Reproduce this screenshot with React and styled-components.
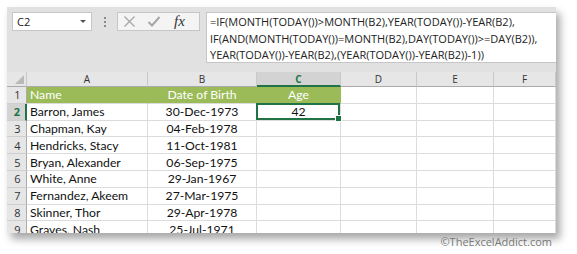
import React from "react";
import styled, { createGlobalStyle } from "styled-components";

const Global = createGlobalStyle`
  html, body { margin: 0; padding: 0; background: #ffffff; }
  body { width: 577px; height: 254px; overflow: hidden; }
`;

const Page = styled.div`
  padding: 7px 0 0 7px;
`;

const Window = styled.div`
  width: 549px;
  height: 226px;
  background: #e1e1e1;
  overflow: hidden;
  box-shadow: 4px 6px 8px rgba(0, 0, 0, 0.35);
  display: flex;
  flex-direction: column;
`;

const FormulaBar = styled.div`
  display: flex;
  flex-shrink: 0;
  align-items: flex-start;
  height: 65px;
  padding: 5px 0 0 5px;
  box-sizing: border-box;
`;

const NameBox = styled.div`
  width: 80px;
  height: 19px;
  box-sizing: border-box;
  background: #fff;
  border: 1px solid #c6c6c6;
  display: flex;
  align-items: center;
  justify-content: space-between;
  padding: 0 4px 0 4px;
  font-family: "Open Sans", sans-serif;
  font-size: 11px;
  color: #222;
`;

const Caret = styled.span`
  width: 0;
  height: 0;
  border-left: 3px solid transparent;
  border-right: 3px solid transparent;
  border-top: 3px solid #555;
  margin-right: 1px;
`;

const Dots = styled.div`
  width: 25px;
  height: 19px;
  display: flex;
  flex-direction: column;
  align-items: center;
  justify-content: center;
  gap: 2px;
  & > span {
    width: 2px;
    height: 2px;
    background: #8a8a8a;
  }
`;

const FxBox = styled.div`
  width: 83px;
  height: 19px;
  box-sizing: border-box;
  background: #f4f4f4;
  border: 1px solid #c6c6c6;
  display: flex;
  align-items: center;
  padding-left: 5px;
  gap: 11px;
  margin-right: 6px;
`;

const Fx = styled.span`
  font-family: "Liberation Serif", serif;
  font-style: italic;
  font-size: 15px;
  color: #333;
  line-height: 1;
  margin-left: 2px;
`;

const FormulaInput = styled.div`
  flex: 1;
  height: 51px;
  box-sizing: border-box;
  background: #fff;
  border: 1px solid #c6c6c6;
  border-right: none;
  padding: 1px 0 0 3px;
  font-family: "Open Sans", sans-serif;
  font-size: 11px;
  line-height: 16.5px;
  color: #222;
  white-space: nowrap;
`;

const Grid = styled.div`
  display: grid;
  flex-shrink: 0;
  grid-template-columns: 20px 121px 109px 84px 76px 77px 62px;
  grid-auto-rows: 16.8px;
  grid-template-rows: 15px;
  background: #fff;
  font-family: Lato, "Liberation Sans", sans-serif;
`;

const Corner = styled.div`
  background: #e6e6e6;
  border-right: 1px solid #c9c9c9;
  border-bottom: 1px solid #ababab;
  position: relative;
  &::after {
    content: "";
    position: absolute;
    right: 2px;
    bottom: 2px;
    width: 0;
    height: 0;
    border-left: 9px solid transparent;
    border-bottom: 9px solid #b9b9b9;
  }
`;

const ColHead = styled.div`
  background: ${(p) => (p.$sel ? "#d3d3d3" : "#e6e6e6")};
  color: ${(p) => (p.$sel ? "#217346" : "#333")};
  font-weight: ${(p) => (p.$sel ? 700 : 400)};
  border-right: 1px solid #c9c9c9;
  border-bottom: ${(p) => (p.$sel ? "2px solid #217346" : "1px solid #ababab")};
  box-sizing: border-box;
  font-family: "Open Sans", sans-serif;
  font-size: 10px;
  display: flex;
  align-items: center;
  justify-content: center;
`;

const RowHead = styled.div`
  background: ${(p) => (p.$sel ? "#d3d3d3" : "#e6e6e6")};
  color: ${(p) => (p.$sel ? "#217346" : "#333")};
  font-weight: ${(p) => (p.$sel ? 700 : 400)};
  border-right: ${(p) => (p.$sel ? "2px solid #217346" : "1px solid #ababab")};
  border-bottom: 1px solid #cfcfcf;
  box-sizing: border-box;
  font-family: "Open Sans", sans-serif;
  font-size: 11px;
  display: flex;
  align-items: center;
  justify-content: center;
  padding-left: 2px;
`;

const Cell = styled.div`
  position: relative;
  box-sizing: border-box;
  background: ${(p) => (p.$head ? "#9bbb59" : "#fff")};
  color: ${(p) => (p.$head ? "#fff" : "#111")};
  border-right: 1px solid ${(p) => (p.$head ? "#9bbb59" : "#dcdcdc")};
  border-bottom: 1px solid #dcdcdc;
  font-size: 12.2px;
  display: flex;
  align-items: center;
  justify-content: ${(p) => (p.$center ? "center" : "flex-start")};
  padding: 0 3px;
  white-space: nowrap;
  overflow: hidden;
`;

const Selection = styled.div`
  position: absolute;
  inset: -1px 0 0 -1px;
  border: 2px solid #217346;
  pointer-events: none;
  &::after {
    content: "";
    position: absolute;
    right: -4px;
    bottom: -4px;
    width: 5px;
    height: 5px;
    background: #217346;
    border: 1px solid #fff;
  }
`;

const SelCell = styled(Cell)`
  overflow: visible;
  z-index: 2;
`;

const Credit = styled.div`
  width: 545px;
  text-align: right;
  font-family: "Open Sans", sans-serif;
  font-size: 11px;
  color: #777;
  margin-top: 1px;
`;

const XIcon = () => (
  <svg width="13" height="13" viewBox="0 0 13 13">
    <path d="M1.5 1.5 L11.5 11.5 M11.5 1.5 L1.5 11.5" stroke="#a6a6a6" strokeWidth="1.3" fill="none" />
  </svg>
);

const CheckIcon = () => (
  <svg width="14" height="13" viewBox="0 0 14 13">
    <path d="M1.5 7 L5 10.5 L12.5 2" stroke="#a6a6a6" strokeWidth="2" fill="none" />
  </svg>
);

const people = [
  ["Barron, James", "30-Dec-1973"],
  ["Chapman, Kay", "04-Feb-1978"],
  ["Hendricks, Stacy", "11-Oct-1981"],
  ["Bryan, Alexander", "06-Sep-1975"],
  ["White, Anne", "29-Jan-1967"],
  ["Fernandez, Akeem", "27-Mar-1975"],
  ["Skinner, Thor", "29-Apr-1978"],
  ["Graves, Nash", "25-Jul-1971"],
];

const cols = ["A", "B", "C", "D", "E", "F"];

export default function App() {
  return (
    <>
      <Global />
      <Page>
        <Window>
          <FormulaBar>
            <NameBox>
              C2
              <Caret />
            </NameBox>
            <Dots>
              <span />
              <span />
              <span />
            </Dots>
            <FxBox>
              <XIcon />
              <CheckIcon />
              <Fx>fx</Fx>
            </FxBox>
            <FormulaInput>
              <div>=IF(MONTH(TODAY())&gt;MONTH(B2),YEAR(TODAY())-YEAR(B2),</div>
              <div>IF(AND(MONTH(TODAY())=MONTH(B2),DAY(TODAY())&gt;=DAY(B2)),</div>
              <div>YEAR(TODAY())-YEAR(B2),(YEAR(TODAY())-YEAR(B2))-1))</div>
            </FormulaInput>
          </FormulaBar>
          <Grid>
            <Corner />
            {cols.map((c) => (
              <ColHead key={c} $sel={c === "C"}>
                {c}
              </ColHead>
            ))}
            <RowHead>1</RowHead>
            <Cell $head>Name</Cell>
            <Cell $head $center>Date of Birth</Cell>
            <Cell $head $center>Age</Cell>
            <Cell />
            <Cell />
            <Cell />
            {people.map(([name, dob], i) => (
              <React.Fragment key={name}>
                <RowHead $sel={i === 0}>{i + 2}</RowHead>
                <Cell>{name}</Cell>
                <Cell $center>{dob}</Cell>
                {i === 0 ? (
                  <SelCell $center>
                    42
                    <Selection />
                  </SelCell>
                ) : (
                  <Cell />
                )}
                <Cell />
                <Cell />
                <Cell />
              </React.Fragment>
            ))}
          </Grid>
        </Window>
        <Credit>©TheExcelAddict.com</Credit>
      </Page>
    </>
  );
}
